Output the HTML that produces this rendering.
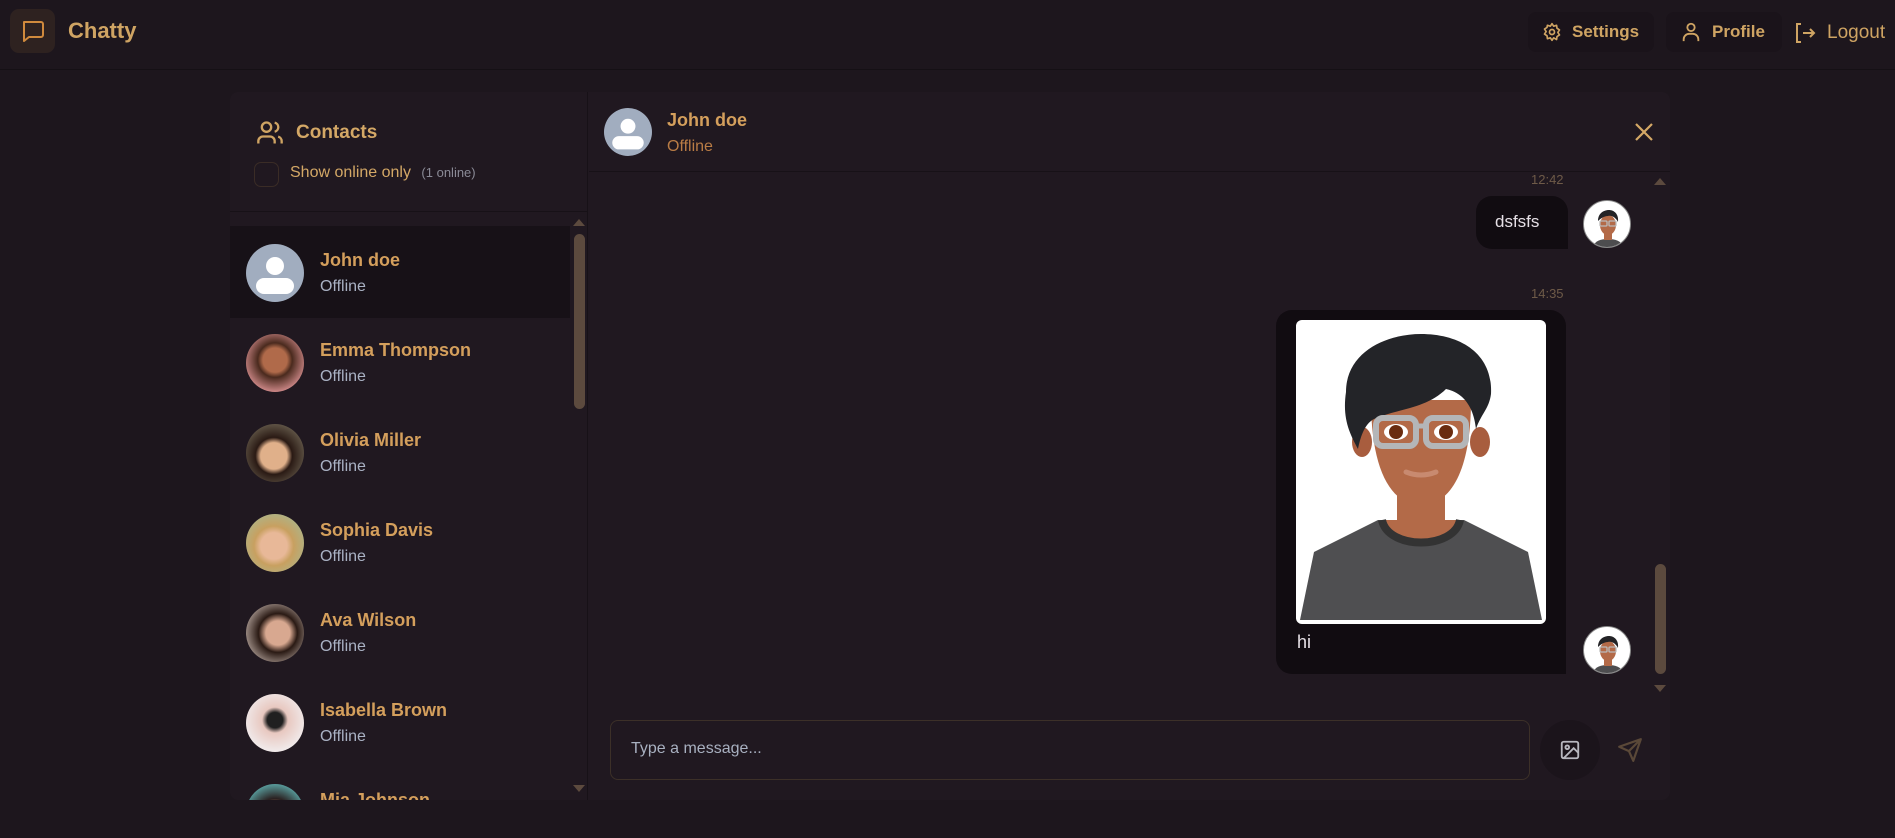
<!DOCTYPE html>
<html><head><meta charset="utf-8">
<style>
*{box-sizing:border-box;margin:0;padding:0}
html,body{width:1895px;height:838px;overflow:hidden;background:#1d161d;font-family:"Liberation Sans",sans-serif}
.nav{position:absolute;left:0;top:0;width:1895px;height:70px;border-bottom:1px solid #151015;background:#1d161d}
.logo{position:absolute;left:10px;top:9px;width:45px;height:44px;border-radius:9px;background:#2e2220}
.brand{position:absolute;left:68px;top:18px;font-size:22px;font-weight:bold;color:#cfa463}
.btn{position:absolute;top:12px;height:40px;border-radius:8px;background:#1a131a;color:#cfa463;font-size:17px;font-weight:bold;display:flex;align-items:center;gap:10px;padding:0 14px}
.panel{position:absolute;left:230px;top:92px;width:1440px;height:708px;border-radius:8px;background:#201820;overflow:hidden}
.side{position:absolute;left:0;top:0;width:358px;height:708px;border-right:1px solid #171117}
.row{position:absolute;left:0;width:340px;height:92px}
.av{position:absolute;left:16px;top:18px;width:58px;height:58px;border-radius:50%;overflow:hidden}
.nm{position:absolute;left:90px;top:24px;font-size:18px;font-weight:bold;color:#d49f5c}
.st{position:absolute;left:90px;top:52px;font-size:16px;color:#aab2c4}
.sb{position:absolute;background:#5c4a3e;border-radius:6px}
</style></head><body>
<div class="nav">
 <div class="logo"><svg width="45" height="44" viewBox="0 0 45 44"><path d="M14 13h17a2 2 0 0 1 2 2v11a2 2 0 0 1-2 2H19l-5 4z" fill="none" stroke="#d08a3d" stroke-width="2" stroke-linejoin="round"/></svg></div>
 <div class="brand">Chatty</div>
 <div class="btn" style="left:1528px;width:126px"><svg width="20" height="20" viewBox="0 0 24 24" fill="none" stroke="#cfa463" stroke-width="2"><circle cx="12" cy="12" r="3"/><path d="M12 2l2 3 3.5-1 .5 3.5 3 2-2 3 2 3-3 2-.5 3.5L14 19l-2 3-2-3-3.5 1L6 16.5l-3-2 2-3-2-3 3-2L6.5 4 10 5z" stroke-linejoin="round"/></svg>Settings</div>
 <div class="btn" style="left:1666px;width:116px"><svg width="22" height="22" viewBox="0 0 24 24" fill="none" stroke="#cfa463" stroke-width="2"><circle cx="12" cy="7" r="4"/><path d="M4 22v-2a6 6 0 0 1 6-6h4a6 6 0 0 1 6 6v2"/></svg>Profile</div>
 <div style="position:absolute;left:1793px;top:21px;display:flex;gap:10px;align-items:center;color:#cfa463;font-size:19px"><svg width="24" height="24" viewBox="0 0 24 24" fill="none" stroke="#cfa463" stroke-width="2"><path d="M8 3H4v18h4M10 12h11M17 8l4 4-4 4"/></svg>Logout</div>
</div>

<div class="panel">
 <div class="side">
  <svg style="position:absolute;left:26px;top:27px" width="28" height="28" viewBox="0 0 24 24" fill="none" stroke="#cfa463" stroke-width="2"><circle cx="9" cy="7" r="4"/><path d="M2 21v-2a4 4 0 0 1 4-4h6a4 4 0 0 1 4 4v2M16 3.1a4 4 0 0 1 0 7.8M22 21v-2a4 4 0 0 0-3-3.9"/></svg>
  <div style="position:absolute;left:66px;top:30px;font-size:19px;font-weight:bold;color:#d4a866">Contacts</div>
  <div style="position:absolute;left:24px;top:70px;width:25px;height:25px;border:1px solid #3a2c26;border-radius:7px"></div>
  <div style="position:absolute;left:60px;top:72px;font-size:16px;color:#d4a866">Show online only <span style="font-size:13px;color:#8a8a96;margin-left:6px">(1 online)</span></div>
  <div style="position:absolute;left:0;top:119px;width:358px;border-top:1px solid #171117"></div>

  <div class="row" style="top:134px;background:#171117"><div class="av" style="background:#a1adbf"><svg width="58" height="58" viewBox="0 0 58 58"><circle cx="29" cy="22" r="9" fill="#fff"/><rect x="10" y="34" width="38" height="16" rx="8" fill="#fff"/></svg></div><div class="nm">John doe</div><div class="st">Offline</div></div>
  <div class="row" style="top:224px"><div class="av" style="background:radial-gradient(circle at 50% 45%,#b06a4a 0 28%,#4a2a1e 40%,#d08a8a 75%)"></div><div class="nm">Emma Thompson</div><div class="st">Offline</div></div>
  <div class="row" style="top:314px"><div class="av" style="background:radial-gradient(circle at 48% 55%,#e0b08a 0 30%,#2a1a14 42%,#6a6050 80%)"></div><div class="nm">Olivia Miller</div><div class="st">Offline</div></div>
  <div class="row" style="top:404px"><div class="av" style="background:radial-gradient(circle at 48% 55%,#e8b898 0 30%,#c8a060 45%,#a8b890 85%)"></div><div class="nm">Sophia Davis</div><div class="st">Offline</div></div>
  <div class="row" style="top:494px"><div class="av" style="background:radial-gradient(circle at 55% 50%,#d8a890 0 28%,#2a1a14 45%,#c0b0a8 85%)"></div><div class="nm">Ava Wilson</div><div class="st">Offline</div></div>
  <div class="row" style="top:584px"><div class="av" style="background:radial-gradient(circle at 50% 45%,#202020 0 18%,#e8c8c0 30%,#f0e8e8 70%)"></div><div class="nm">Isabella Brown</div><div class="st">Offline</div></div>
  <div class="row" style="top:674px"><div class="av" style="background:radial-gradient(circle at 50% 55%,#c89070 0 25%,#2a2020 40%,#60b0b0 80%)"></div><div class="nm">Mia Johnson</div><div class="st">Offline</div></div>

  <svg style="position:absolute;left:343px;top:126px" width="12" height="8"><path d="M0 8L6 1l6 7z" fill="#5c4a3e"/></svg>
  <div class="sb" style="left:344px;top:142px;width:11px;height:175px"></div>
  <svg style="position:absolute;left:343px;top:693px" width="12" height="8"><path d="M0 0l6 7 6-7z" fill="#5c4a3e"/></svg>
 </div>

 <div style="position:absolute;left:359px;top:0;width:1081px;height:80px;border-bottom:1px solid #171117">
  <div style="position:absolute;left:15px;top:16px;width:48px;height:48px;border-radius:50%;background:#a1adbf;overflow:hidden"><svg width="48" height="48" viewBox="0 0 58 58"><circle cx="29" cy="22" r="9" fill="#fff"/><rect x="10" y="34" width="38" height="16" rx="8" fill="#fff"/></svg></div>
  <div style="position:absolute;left:78px;top:18px;font-size:18px;font-weight:bold;color:#d49f5c">John doe</div>
  <div style="position:absolute;left:78px;top:46px;font-size:16px;color:#b97c45">Offline</div>
  <svg style="position:absolute;left:1043px;top:28px" width="24" height="24" viewBox="0 0 24 24" stroke="#d4a866" stroke-width="2.2"><path d="M4 4l16 16M20 4L4 20"/></svg>
 </div>

 <div style="position:absolute;left:1301px;top:80px;font-size:13px;color:#6e5a48">12:42</div>
 <div style="position:absolute;left:1246px;top:104px;width:92px;height:53px;border-radius:16px 16px 0 16px;background:#110c11;color:#e6e0e6;font-size:17px;padding:16px 0 0 19px">dsfsfs</div>
 <div style="position:absolute;left:1353px;top:108px;width:48px;height:48px;border-radius:50%;border:1px solid #888;background:#fff;overflow:hidden"><svg width="48" height="48" viewBox="0 0 48 48"><path d="M8 48c2-8 8-10 16-10s14 2 16 10z" fill="#4d4d4f"/><rect x="20" y="30" width="8" height="9" fill="#b36a48"/><ellipse cx="24" cy="24" rx="8" ry="10" fill="#b36a48"/><path d="M14 20c0-8 6-11 11-11s10 4 9 12c-2-4-6-7-10-6-4 0-8 3-10 5z" fill="#232326"/><rect x="16" y="20" width="7" height="5" rx="1" fill="none" stroke="#bbb" stroke-width="1.3"/><rect x="25" y="20" width="7" height="5" rx="1" fill="none" stroke="#bbb" stroke-width="1.3"/></svg></div>

 <div style="position:absolute;left:1301px;top:194px;font-size:13px;color:#6e5a48">14:35</div>
 <div style="position:absolute;left:1046px;top:218px;width:290px;height:364px;border-radius:16px 16px 0 16px;background:#110c11">
  <div style="position:absolute;left:20px;top:10px;width:250px;height:304px;border-radius:6px;background:#fff;overflow:hidden">
   <svg width="250" height="304" viewBox="0 0 250 304">
    <path d="M4 300L18 232 82 200h86l64 32 14 68z" fill="#4f4f51"/>
    <path d="M86 200c6 30 72 30 78 0" fill="#b36a48" stroke="#333" stroke-width="8"/>
    <rect x="101" y="170" width="48" height="42" fill="#b36a48"/>
    <ellipse cx="66" cy="122" rx="10" ry="15" fill="#a85d3e"/><ellipse cx="184" cy="122" rx="10" ry="15" fill="#a85d3e"/>
    <path d="M75 80c0 70 20 105 50 105s50-35 50-105z" fill="#b36a48"/>
    <path d="M50 72c0-40 40-58 75-58 40 0 72 20 70 60-2 15-10 20-15 35-3-30-20-38-30-40-20 20-50 20-72 30-10 5-14 20-16 30-8-15-16-30-12-57z" fill="#232428"/>
    <rect x="80" y="98" width="40" height="28" rx="7" fill="none" stroke="#b4b6b8" stroke-width="6"/>
    <rect x="130" y="98" width="40" height="28" rx="7" fill="none" stroke="#b4b6b8" stroke-width="6"/>
    <path d="M120 106h10" stroke="#b4b6b8" stroke-width="5"/>
    <ellipse cx="100" cy="112" rx="12" ry="8" fill="#fff"/><circle cx="100" cy="112" r="7" fill="#6a2c10"/>
    <ellipse cx="150" cy="112" rx="12" ry="8" fill="#fff"/><circle cx="150" cy="112" r="7" fill="#6a2c10"/>
    <path d="M110 152q15 6 30 0" stroke="#c88a70" stroke-width="5" fill="none" stroke-linecap="round"/>
   </svg>
  </div>
  <div style="position:absolute;left:21px;top:322px;font-size:18px;color:#e6e0e6">hi</div>
 </div>
 <div style="position:absolute;left:1353px;top:534px;width:48px;height:48px;border-radius:50%;border:1px solid #888;background:#fff;overflow:hidden"><svg width="48" height="48" viewBox="0 0 48 48"><path d="M8 48c2-8 8-10 16-10s14 2 16 10z" fill="#4d4d4f"/><rect x="20" y="30" width="8" height="9" fill="#b36a48"/><ellipse cx="24" cy="24" rx="8" ry="10" fill="#b36a48"/><path d="M14 20c0-8 6-11 11-11s10 4 9 12c-2-4-6-7-10-6-4 0-8 3-10 5z" fill="#232326"/><rect x="16" y="20" width="7" height="5" rx="1" fill="none" stroke="#bbb" stroke-width="1.3"/><rect x="25" y="20" width="7" height="5" rx="1" fill="none" stroke="#bbb" stroke-width="1.3"/></svg></div>

 <svg style="position:absolute;left:1424px;top:85px" width="12" height="8"><path d="M0 8L6 1l6 7z" fill="#5c4a3e"/></svg>
 <div class="sb" style="left:1425px;top:472px;width:11px;height:110px"></div>
 <svg style="position:absolute;left:1424px;top:593px" width="12" height="8"><path d="M0 0l6 7 6-7z" fill="#5c4a3e"/></svg>

 <div style="position:absolute;left:380px;top:628px;width:920px;height:60px;border:1px solid #3c3028;border-radius:8px;color:#a8b0c0;font-size:16px;padding:19px 0 0 20px">Type a message...</div>
 <div style="position:absolute;left:1310px;top:628px;width:60px;height:60px;border-radius:50%;background:#1b141b"><svg style="position:absolute;left:19px;top:19px" width="22" height="22" viewBox="0 0 24 24" fill="none" stroke="#b8b8c0" stroke-width="2"><rect x="3" y="3" width="18" height="18" rx="2"/><circle cx="9" cy="9" r="2"/><path d="M21 15l-5-5L5 21"/></svg></div>
 <svg style="position:absolute;left:1387px;top:645px" width="26" height="26" viewBox="0 0 24 24" fill="none" stroke="#5a4838" stroke-width="2" stroke-linejoin="round"><path d="M22 2L2 9l9 4 4 9zM11 13l11-11"/></svg>
</div>
</body></html>
